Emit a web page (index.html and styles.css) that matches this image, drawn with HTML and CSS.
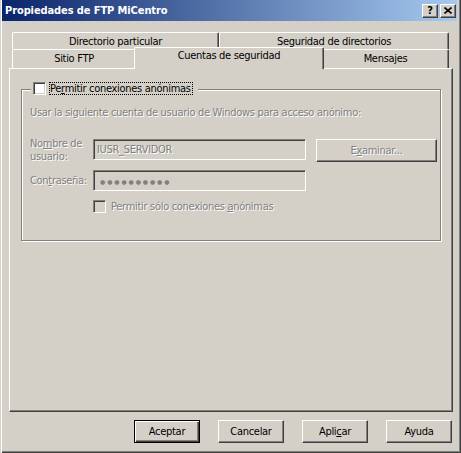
FILE: index.html
```html
<!DOCTYPE html>
<html>
<head>
<meta charset="utf-8">
<link rel="stylesheet" href="styles.css">
</head>
<body>
<div class="window">
  <div class="titlebar">
    <span class="title">Propiedades de FTP MiCentro</span>
    <div class="caption-btns">
      <div class="cbtn help">?</div>
      <div class="cbtn close"><svg width="8" height="7" viewBox="0 0 8 7"><path d="M0.5 0.5 L7.5 6.5 M7.5 0.5 L0.5 6.5" stroke="#000" stroke-width="1.6" fill="none"/></svg></div>
    </div>
  </div>

  <div class="tabs">
    <div class="tabrow back">
      <div class="tab t-dir">Directorio particular</div>
      <div class="tab t-seg">Seguridad de directorios</div>
    </div>
    <div class="tabrow front">
      <div class="tab t-sitio">Sitio FTP</div>
      <div class="tab active">Cuentas de seguridad</div>
      <div class="tab t-msg">Mensajes</div>
    </div>
  </div>

  <div class="panel">
    <div class="group">
      <div class="legend">
        <span class="check"></span>
        <span class="focus">Pe<u>r</u>mitir conexiones anónimas</span>
      </div>
      <div class="desc disabled">Usar la siguiente cuenta de usuario de Windows para acceso anónimo:</div>
      <div class="row row-user">
        <div class="lbl disabled">No<u>m</u>bre de<br>usuario:</div>
        <div class="field disabled">IUSR_SERVIDOR</div>
        <div class="btn browse disabled">E<u>x</u>aminar...</div>
      </div>
      <div class="row row-pass">
        <div class="lbl lbl-pass disabled">Con<u>t</u>raseña:</div>
        <div class="field pass"><span class="dots">●●●●●●●●●●</span></div>
      </div>
      <div class="row row-only">
        <span class="check dis"></span>
        <span class="disabled only-lbl">Permitir sólo conexiones <u>a</u>nónimas</span>
      </div>
    </div>
  </div>

  <div class="buttons">
    <div class="btn default">Aceptar</div>
    <div class="btn">Cancelar</div>
    <div class="btn">Apli<u>c</u>ar</div>
    <div class="btn">Ayuda</div>
  </div>
</div>
</body>
</html>
```
FILE: styles.css
```css
html, body {
  margin: 0;
  padding: 0;
  background: #d4d0c8;
}
body {
  font-family: "DejaVu Sans Condensed", "DejaVu Sans", sans-serif;
  font-size: 11px;
  letter-spacing: -0.3px;
  color: #000;
}
.window {
  width: 461px;
  height: 453px;
  box-sizing: border-box;
  background: #d4d0c8;
  box-shadow: inset 1px 0 #d4d0c8, inset 2px 0 #fff, inset -1px -1px #404040, inset -2px -2px #808080;
  overflow: hidden;
}
.titlebar {
  height: 21px;
  margin: 0 4px 0 2px;
  background: linear-gradient(to right, #0a246a, #a6caf0);
  display: flex;
  align-items: center;
  justify-content: space-between;
}
.title {
  color: #fff;
  font-weight: bold;
  padding-left: 3px;
  line-height: 13px;
  letter-spacing: -0.1px;
}
.caption-btns {
  display: flex;
  gap: 2px;
  margin-right: 1px;
  margin-top: 1px;
}
.cbtn {
  width: 16px;
  height: 14px;
  box-sizing: border-box;
  background: #d4d0c8;
  border: 1px solid;
  border-color: #fff #404040 #404040 #fff;
  box-shadow: inset -1px -1px #808080;
  display: flex;
  align-items: center;
  justify-content: center;
  font-weight: bold;
  font-size: 11px;
  line-height: 11px;
  letter-spacing: 0;
}
.cbtn svg { display: block; margin-top: -1px; }
.help { padding-bottom: 1px; }

/* tabs */
.tabs {
  margin: 11px 0 0 12px;
  width: 437px;
}
.tabrow { display: flex; align-items: flex-start; }
.tab {
  box-sizing: border-box;
  background: #d4d0c8;
  border-top: 1px solid #fff;
  border-left: 1px solid #fff;
  border-right: 1px solid #404040;
  box-shadow: inset -1px 0 #808080;
  border-radius: 2px 2px 0 0;
  text-align: center;
  line-height: 13px;
  padding-top: 2px;
}
.back .tab { height: 17px; }
.t-dir { width: 207px; }
.t-seg { width: 230px; }
.front .tab { height: 19px; }
.t-sitio { width: 124px; }
.t-msg { width: 127px; }
.front .tab.active {
  position: relative;
  width: 190px;
  height: 22px;
  margin: -2px -2px -1px -2px;
  padding-top: 1px;
}

/* panel */
.panel {
  margin-left: 9px;
  width: 444px;
  height: 344px;
  box-sizing: border-box;
  border-top: 1px solid #fff;
  border-left: 1px solid #fff;
  border-right: 1px solid #404040;
  border-bottom: 1px solid #404040;
  box-shadow: inset -1px -1px #808080;
  display: flow-root;
}
.group {
  margin: 20px 0 0 11px;
  width: 420px;
  height: 152px;
  box-sizing: border-box;
  border: 1px solid #808080;
  box-shadow: 1px 1px #fff, inset 1px 1px #fff;
  padding-left: 8px;
}
.legend {
  display: flex;
  align-items: center;
  width: fit-content;
  margin: -8px 0 0 1px;
  padding: 0 5px 0 2px;
  background: #d4d0c8;
  height: 13px;
}
.check {
  width: 13px;
  height: 13px;
  box-sizing: border-box;
  background: #fff;
  border: 1px solid;
  border-color: #808080 #fff #fff #808080;
  box-shadow: inset 1px 1px #404040, inset -1px -1px #d4d0c8;
  flex: none;
}
.check.dis { background: #d4d0c8; }
.focus {
  margin-left: 3px;
  border: 1px dotted #000;
  line-height: 11px;
  padding: 0 1px 0 0;
}
.disabled {
  color: #808080;
  text-shadow: 1px 1px 0 #fff;
}
.desc {
  margin-top: 11px;
  line-height: 13px;
  white-space: nowrap;
}
.row { display: flex; align-items: flex-start; }
.row-user { margin-top: 18px; }
.lbl {
  width: 63px;
  line-height: 13px;
  flex: none;
}
.field {
  width: 213px;
  height: 21px;
  box-sizing: border-box;
  border: 1px solid;
  border-color: #808080 #fff #fff #808080;
  box-shadow: inset 1px 1px #404040, inset -1px -1px #d4d0c8;
  background: #d4d0c8;
  padding: 3px 0 0 3px;
  line-height: 13px;
  flex: none;
}
.row-user .field { margin-top: 2px; }
.btn {
  box-sizing: border-box;
  width: 66px;
  height: 23px;
  background: #d4d0c8;
  border: 1px solid;
  border-color: #fff #404040 #404040 #fff;
  box-shadow: inset -1px -1px #808080;
  display: flex;
  align-items: center;
  justify-content: center;
  line-height: 13px;
}
.btn.browse {
  width: 121px;
  margin-left: 10px;
  margin-top: 2px;
}
.row-pass { margin-top: 7px; }
.lbl-pass { padding-top: 4px; }
.pass { padding-top: 3px; padding-left: 6px; }
.dots {
  color: #808080;
  font-family: "DejaVu Sans", sans-serif;
  font-size: 6px;
  letter-spacing: 1.9px;
  line-height: 13px;
}
.row-only { margin-top: 9px; align-items: center; padding-left: 63px; }
.only-lbl { margin-left: 5px; line-height: 13px; }

/* bottom buttons */
.buttons {
  display: flex;
  justify-content: flex-end;
  gap: 18px;
  margin-top: 8px;
  padding-right: 9px;
}
.btn.default {
  border: 1px solid #000;
  box-shadow: inset 1px 1px #fff, inset -1px -1px #404040, inset -2px -2px #808080;
}
u { text-decoration: underline; text-underline-offset: 1px; }
```
